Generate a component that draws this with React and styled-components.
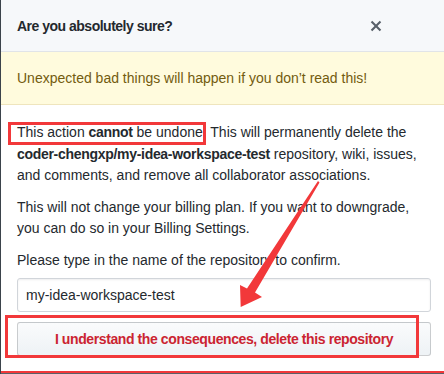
import React from 'react';
import styled, { createGlobalStyle } from 'styled-components';

const GlobalStyle = createGlobalStyle`
    html, body {
        margin: 0;
        padding: 0;
        background: #fff;
    }
    body {
        color: #24292e;
        font-family: "Segoe UI", "Liberation Sans", Arial, sans-serif;
        font-size: 14px;
    }
    strong {
        letter-spacing: -0.3px;
    }
`;

const MARK = '#f2383a';

const Frame = styled.div`
    border-left: 1px solid #3b434b;
    box-sizing: border-box;
    display: flex;
    flex-direction: column;
    height: 374px;
    overflow: hidden;
    position: relative;
    width: 444px;
`;

const Header = styled.div`
    align-items: center;
    background-color: #f6f8fa;
    border-bottom: 1px solid #e1e4e8;
    box-sizing: border-box;
    display: flex;
    height: 52px;
    justify-content: space-between;
    padding-left: 16px;
`;

const Title = styled.h3`
    font-size: 14px;
    font-weight: 600;
    letter-spacing: -0.5px;
    margin: 0;
`;

const CloseButton = styled.button`
    background: none;
    border: 0;
    color: #586069;
    display: flex;
    margin-right: 62px;
    padding: 0;
`;

const Flash = styled.div`
    align-items: center;
    background-color: #fffbdd;
    border-bottom: 1px solid #efe5bd;
    box-sizing: border-box;
    color: #735c0f;
    display: flex;
    height: 53px;
    padding: 0 16px;
`;

const Body = styled.div`
    flex: 1;
    padding: 17px 13px 0 16px;
`;

const Para = styled.p`
    line-height: 21.5px;
    margin: 0 0 ${(p) => p.$gap || 10}px;
`;

const Marked = styled.span`
    position: relative;

    &::before {
        border: 3px solid ${MARK};
        bottom: -5px;
        box-sizing: border-box;
        content: '';
        left: -9px;
        position: absolute;
        right: -3px;
        top: -2px;
    }
`;

const Input = styled.input`
    border: 1px solid #d1d5da;
    border-radius: 3px;
    box-shadow: inset 0 1px 2px rgba(27, 31, 35, 0.075);
    box-sizing: border-box;
    color: #24292e;
    display: block;
    font-family: inherit;
    font-size: 14px;
    height: 34px;
    padding: 6px 8px;
    width: 100%;
`;

const ButtonWrap = styled.div`
    margin-top: 10px;
    position: relative;

    &::after {
        border: 3px solid ${MARK};
        bottom: -2px;
        box-sizing: border-box;
        content: '';
        left: -12px;
        pointer-events: none;
        position: absolute;
        right: 12px;
        top: -7px;
    }
`;

const DangerButton = styled.button`
    background-image: linear-gradient(-180deg, #fafbfc 0%, #eff3f6 90%);
    border: 1px solid rgba(27, 31, 35, 0.2);
    border-radius: 3px;
    box-sizing: border-box;
    color: #cb2431;
    display: block;
    font-family: inherit;
    font-size: 14px;
    font-weight: 600;
    height: 34px;
    letter-spacing: -0.4px;
    width: 100%;
`;

const BottomEdge = styled.div`
    background-color: #5a6068;
    border-top: 2px solid ${MARK};
    height: 1px;
`;

const ArrowLayer = styled.svg`
    left: -1px;
    pointer-events: none;
    position: absolute;
    top: 0;
`;

const App = () => (
    <>
        <GlobalStyle />
        <Frame>
            <Header>
                <Title>Are you absolutely sure?</Title>
                <CloseButton aria-label='Close dialog'>
                    <svg width='12' height='16' viewBox='0 0 12 16' fill='currentColor'>
                        <path d='M7.48 8l3.75 3.75-1.48 1.48L6 9.48l-3.75 3.75-1.48-1.48L4.52 8 .77 4.25l1.48-1.48L6 6.52l3.75-3.75 1.48 1.48L7.48 8z' />
                    </svg>
                </CloseButton>
            </Header>
            <Flash>Unexpected bad things will happen if you don’t read this!</Flash>
            <Body>
                <Para>
                    <Marked>This action <strong>cannot</strong> be undone</Marked>. This will permanently delete the{' '}
                    <strong>coder-chengxp/my-idea-workspace-test</strong> repository, wiki, issues, and comments, and
                    remove all collaborator associations.
                </Para>
                <Para>
                    This will not change your billing plan. If you want to downgrade, you can do so in your Billing
                    Settings.
                </Para>
                <Para $gap={7}>Please type in the name of the repository to confirm.</Para>
                <Input defaultValue='my-idea-workspace-test' />
                <ButtonWrap>
                    <DangerButton>I understand the consequences, delete this repository</DangerButton>
                </ButtonWrap>
            </Body>
            <BottomEdge />
            <ArrowLayer width='444' height='374' viewBox='0 0 444 374'>
                <polygon
                    fill={MARK}
                    points='318,181 247,288.5 240,285 240.7,307 262,297 255,292.5 319.5,182.5'
                />
            </ArrowLayer>
        </Frame>
    </>
);

export default App;
